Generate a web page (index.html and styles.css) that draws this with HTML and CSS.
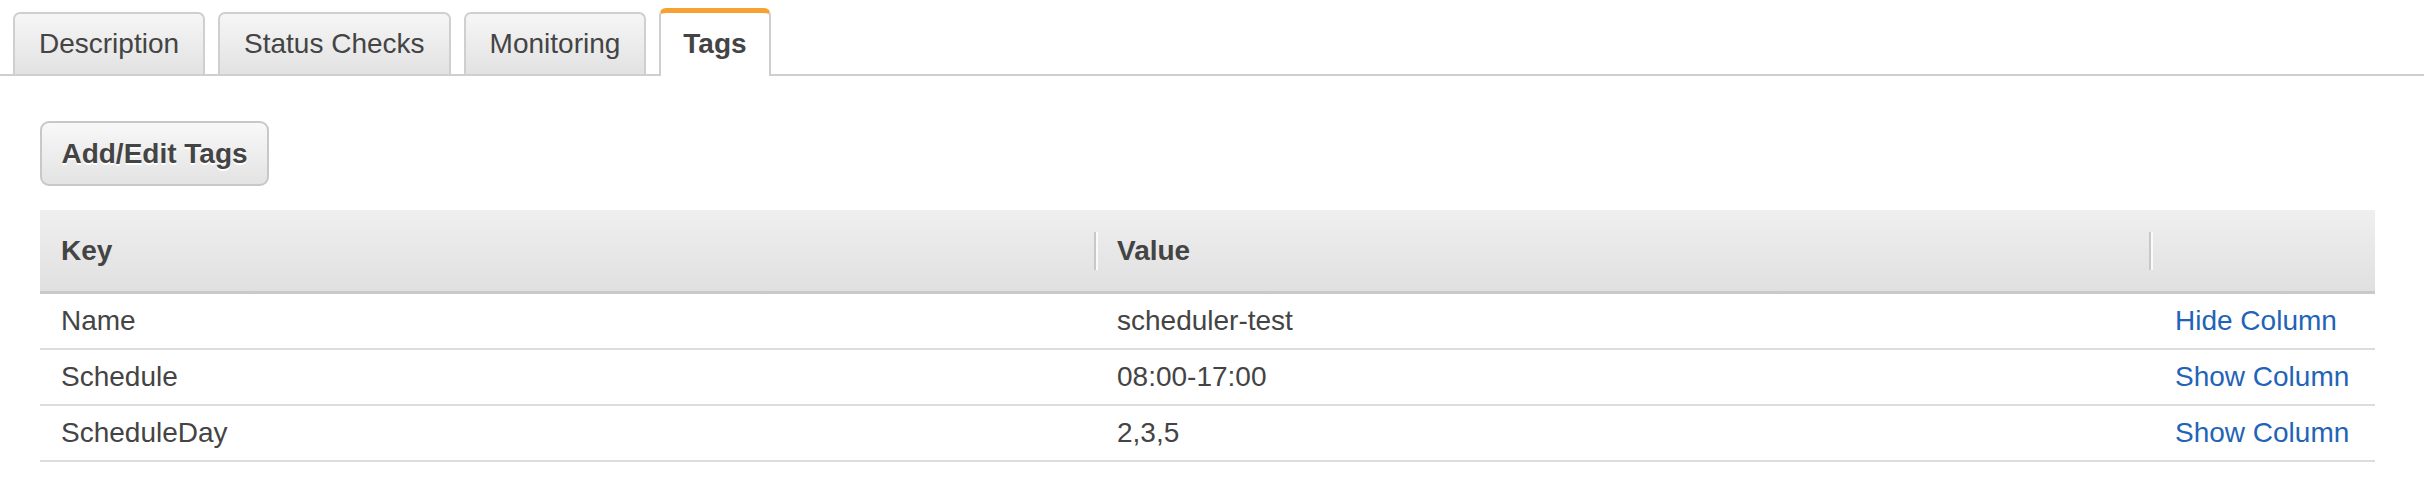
FILE: index.html
```html
<!DOCTYPE html>
<html>
<head>
<meta charset="utf-8">
<link rel="stylesheet" href="styles.css">
</head>
<body>
<div class="tabs">
  <div class="tab">Description</div>
  <div class="tab">Status Checks</div>
  <div class="tab">Monitoring</div>
  <div class="tab active">Tags</div>
</div>
<div class="content">
  <button class="btn">Add/Edit Tags</button>
  <div class="table">
    <div class="row head">
      <div class="cell">Key</div>
      <div class="cell sep">Value</div>
      <div class="cell sep"></div>
    </div>
    <div class="row">
      <div class="cell">Name</div>
      <div class="cell">scheduler-test</div>
      <div class="cell link">Hide Column</div>
    </div>
    <div class="row">
      <div class="cell">Schedule</div>
      <div class="cell">08:00-17:00</div>
      <div class="cell link">Show Column</div>
    </div>
    <div class="row">
      <div class="cell">ScheduleDay</div>
      <div class="cell">2,3,5</div>
      <div class="cell link">Show Column</div>
    </div>
  </div>
</div>
</body>
</html>
```
FILE: styles.css
```css
html, body {
  margin: 0;
  padding: 0;
  background: #fff;
}
body {
  font-family: "Liberation Sans", Arial, Helvetica, sans-serif;
  font-size: 28px;
  color: #444;
}
.tabs {
  display: flex;
  align-items: flex-end;
  gap: 13px;
  padding: 8px 0 0 13px;
  border-bottom: 2px solid #cfcfcf;
  height: 66px;
}
.tab {
  box-sizing: border-box;
  height: 62px;
  padding: 0 24px;
  display: flex;
  align-items: center;
  border: 2px solid #cfcfcf;
  border-bottom: none;
  border-radius: 7px 7px 0 0;
  background: linear-gradient(#f6f6f6, #e2e2e2);
  color: #444;
}
.tab.active {
  height: 68px;
  margin-bottom: -2px;
  padding: 0 22px;
  background: #fff;
  border-top: 5px solid #f7a133;
  font-weight: bold;
  padding-bottom: 2px;
}
.content {
  padding: 45px 49px 0 40px;
}
.btn {
  display: block;
  box-sizing: border-box;
  height: 65px;
  width: 229px;
  padding: 0;
  font-family: inherit;
  font-size: 28px;
  font-weight: bold;
  color: #444;
  text-shadow: 0 2px 0 #fff;
  background: linear-gradient(#f8f8f8, #e3e3e3);
  border: 2px solid #c8c8c8;
  border-radius: 9px;
}
.table {
  margin-top: 24px;
}
.row {
  display: grid;
  grid-template-columns: 1055px 1055px 1fr;
  height: 56px;
  box-sizing: border-box;
  border-bottom: 2px solid #dcdcdc;
  align-items: center;
}
.row.head {
  height: 84px;
  background: linear-gradient(#efefef, #e0e0e0);
  border-bottom: 3px solid #c9c9c9;
  font-weight: bold;
}
.cell {
  padding-left: 21px;
  white-space: nowrap;
}
.row .cell:nth-child(2) {
  padding-left: 22px;
}
.row .cell:nth-child(3) {
  padding-left: 25px;
}
.cell.sep {
  position: relative;
  height: 100%;
  display: flex;
  align-items: center;
  box-sizing: border-box;
}
.cell.sep::before {
  content: "";
  position: absolute;
  left: -1px;
  top: 22px;
  width: 2px;
  height: 38px;
  background: #c8c8c8;
  border-right: 2px solid #fafafa;
}
.head .cell:first-child {
  padding-bottom: 0;
}
.link {
  color: #1f64b7;
}
```
